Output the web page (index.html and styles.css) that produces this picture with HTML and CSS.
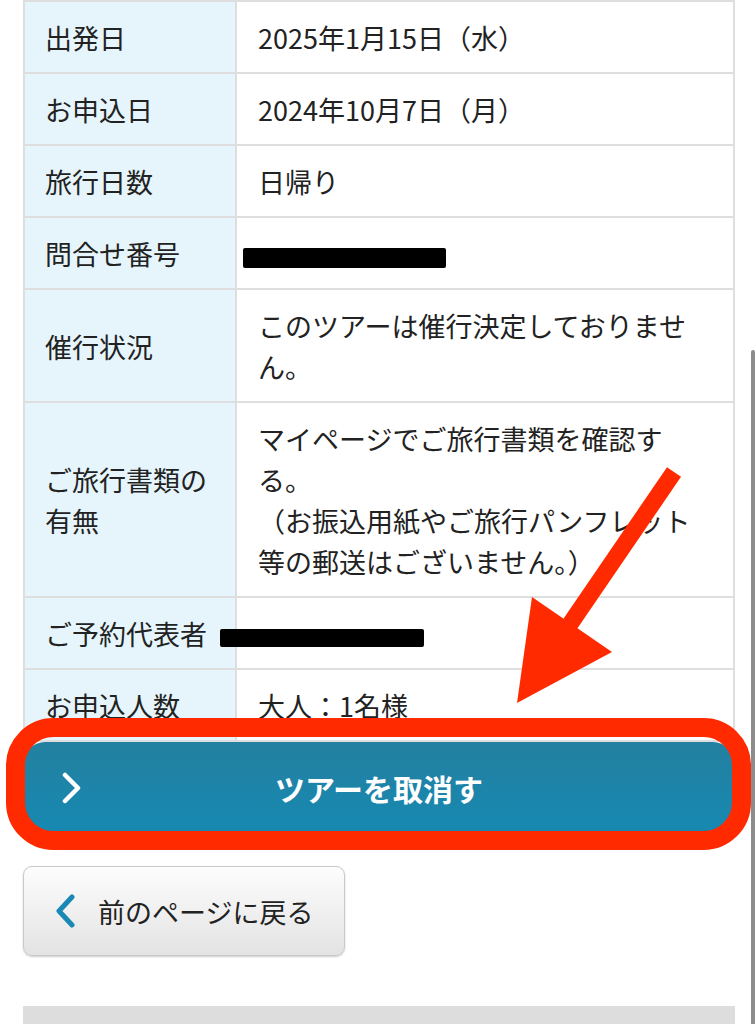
FILE: index.html
```html
<!DOCTYPE html>
<html lang="ja">
  <head>
    <meta charset="UTF-8" />
    <title>予約内容の確認</title>
    <link rel="stylesheet" href="styles.css">
  </head>
  <body>
    <div id="page">
      <!-- Reservation details -->
      <table class="detail">
        <colgroup>
          <col class="col-label">
          <col>
        </colgroup>
        <tr>
          <th>出発日</th>
          <td>2025年1月15日（水）</td>
        </tr>
        <tr>
          <th>お申込日</th>
          <td>2024年10月7日（月）</td>
        </tr>
        <tr>
          <th>旅行日数</th>
          <td>日帰り</td>
        </tr>
        <tr>
          <th>問合せ番号</th>
          <td><span class="redact redact-number"></span></td>
        </tr>
        <tr>
          <th>催行状況</th>
          <td>このツアーは催行決定しておりません。</td>
        </tr>
        <tr>
          <th>ご旅行書類の有無</th>
          <td>マイページでご旅行書類を確認する。<br>（お振込用紙やご旅行パンフレット等の郵送はございません。）</td>
        </tr>
        <tr>
          <th>ご予約代表者</th>
          <td><span class="redact redact-name"></span></td>
        </tr>
        <tr>
          <th>お申込人数</th>
          <td>大人：1名様</td>
        </tr>
      </table>

      <a class="btn-cancel" href="#">
        <span class="btn-icon">
          <svg width="22" height="32" viewBox="0 0 22 32">
            <path d="M4 3 L17 16 L4 29" fill="none" stroke="#fff" stroke-width="4.5" stroke-linecap="round" stroke-linejoin="round"/>
          </svg>
        </span>
        <span class="btn-label">ツアーを取消す</span>
      </a>

      <a class="btn-back" href="#">
        <svg width="22" height="34" viewBox="0 0 22 34">
          <path d="M18 3 L5 17 L18 31" fill="none" stroke="#1a88b4" stroke-width="5" stroke-linecap="round" stroke-linejoin="round"/>
        </svg>
        <span>前のページに戻る</span>
      </a>

      <div class="footer-bar"></div>
    </div>

    <!-- Red annotation drawn over the page -->
    <svg class="annotation" width="756" height="1024" viewBox="0 0 756 1024">
      <rect x="15.5" y="727.5" width="726" height="113" rx="38" fill="none" stroke="#ff2a00" stroke-width="19"/>
      <line x1="674" y1="472" x2="566" y2="630" stroke="#ff2a00" stroke-width="17"/>
      <polygon points="517,703 532,597 612,652" fill="#ff2a00"/>
    </svg>

    <div class="scroll-indicator"></div>
  </body>
</html>
```

FILE: styles.css
```css
html,
body {
  margin: 0;
  padding: 0;
  overflow: hidden;
  background-color: #fff;
}

body {
  position: relative;
  width: 756px;
  height: 1024px;
  font-family: 'Noto Sans CJK JP', 'Noto Sans', sans-serif;
  color: #222;
}

#page {
  padding: 0 21px 0 23px;
}

/* Details table */
.detail {
  width: 100%;
  border-collapse: collapse;
  table-layout: fixed;
  border: 2px solid #dedede;
  font-size: 27px;
  line-height: 41px;
}

.col-label {
  width: 212px;
}

.detail th,
.detail td {
  border: 2px solid #dedede;
  text-align: left;
  vertical-align: middle;
  font-weight: normal;
}

.detail th {
  background-color: #e6f5fb;
  padding: 15px 20px 14px 20px;
}

.detail td {
  background-color: #fff;
  padding: 15px 20px 14px 21px;
}

.redact {
  display: inline-block;
  position: relative;
  vertical-align: middle;
  background-color: #000;
  border-radius: 2px;
}

.redact-number {
  width: 203px;
  height: 20px;
  margin-left: -15px;
}

.redact-name {
  width: 204px;
  height: 18px;
  margin-left: -38px;
}

/* Cancel button */
.btn-cancel {
  display: grid;
  grid-template-columns: 1fr auto 1fr;
  align-items: center;
  height: 92px;
  margin-top: 0;
  border-radius: 22px;
  background: linear-gradient(#2480a0, #1689b2);
  color: #fff;
  text-decoration: none;
  font-size: 30px;
  font-weight: bold;
}

.btn-icon {
  display: flex;
  padding-left: 38px;
}

.btn-label {
  grid-column: 2;
}

/* Back button */
.btn-back {
  display: flex;
  align-items: center;
  gap: 22px;
  box-sizing: border-box;
  width: 322px;
  height: 90px;
  margin-top: 32px;
  padding-left: 30px;
  border: 1px solid #c9c9c9;
  border-radius: 9px;
  background: linear-gradient(#fdfdfd, #e3e3e3);
  box-shadow: 0 1px 2px rgba(0, 0, 0, 0.2);
  color: #222;
  text-decoration: none;
  font-size: 27px;
}

.footer-bar {
  height: 30px;
  margin-top: 50px;
  background-color: #dddddd;
}

/* Overlays */
.annotation {
  position: absolute;
  top: 0;
  left: 0;
  pointer-events: none;
}

.scroll-indicator {
  position: absolute;
  top: 350px;
  left: 751px;
  width: 4px;
  height: 700px;
  border-radius: 2px;
  background-color: #8c8c8c;
}
```
